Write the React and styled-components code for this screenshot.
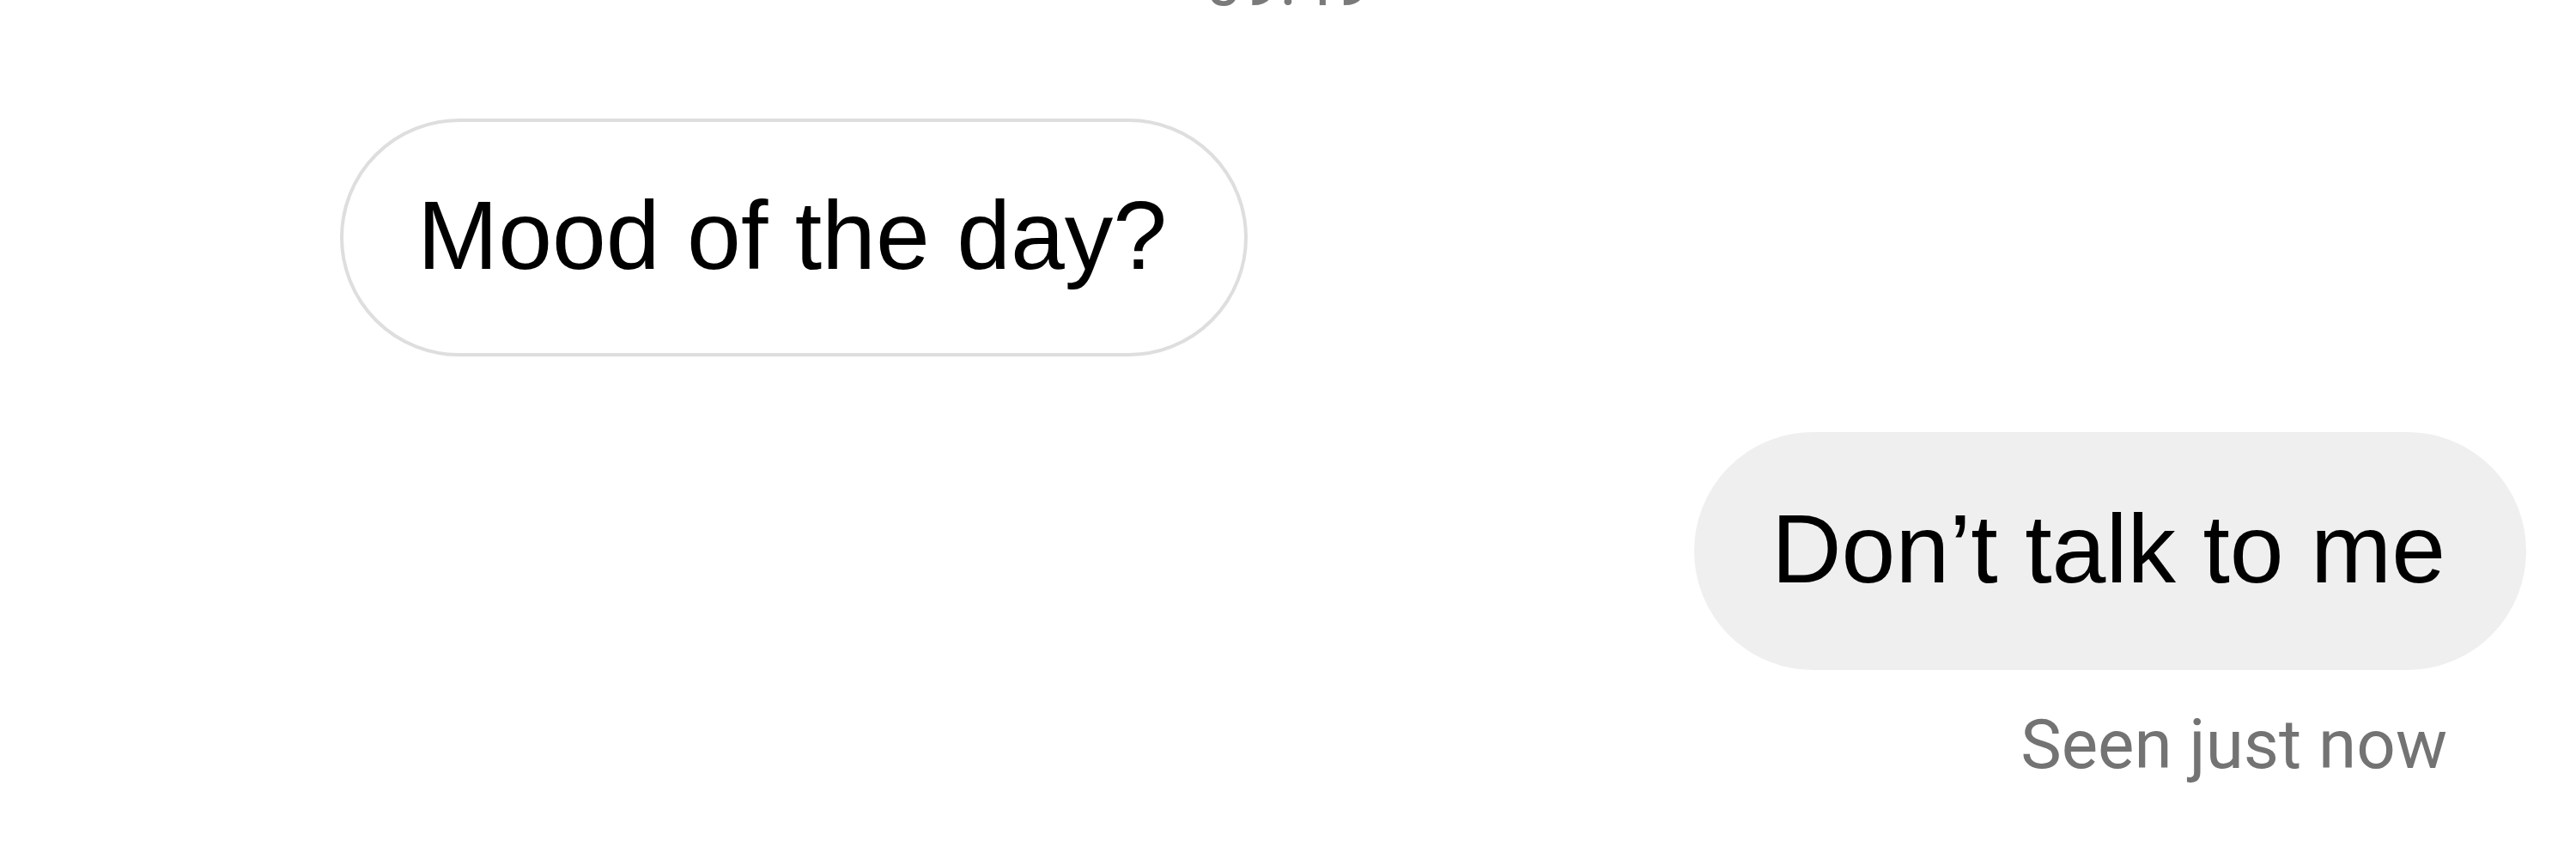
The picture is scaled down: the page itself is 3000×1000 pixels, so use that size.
import React from 'react';
import styled, { createGlobalStyle } from 'styled-components';

const GlobalStyle = createGlobalStyle`
  html, body {
    margin: 0;
    padding: 0;
    background: #ffffff;
  }
  body {
    font-family: 'Liberation Sans', Arial, sans-serif;
  }
`;

const Screen = styled.div`
  width: 3000px;
  height: 1000px;
  overflow: hidden;
  background: #ffffff;
  display: flex;
  flex-direction: column;
`;

// only the bottom of the time shows: the rest scrolled off the top
const Timestamp = styled.div`
  margin-top: -66px;
  text-align: center;
  font-family: Roboto, 'Liberation Sans', sans-serif;
  font-size: 78px;
  color: #7a7a7a;
  line-height: normal;
`;

const Thread = styled.div`
  display: flex;
  flex-direction: column;
  padding: 113px 58px 0 396px;
`;

const Row = styled.div`
  display: flex;
  justify-content: ${(props) => (props.mine ? 'flex-end' : 'flex-start')};
  margin-top: ${(props) => props.gap || 0}px;
`;

const Bubble = styled.div`
  box-sizing: border-box;
  height: 277px;
  display: flex;
  align-items: center;
  padding: 0 90px 4px 86px;
  border-radius: 140px;
  font-size: 113px;
  line-height: 1;
  color: #000000;
  white-space: nowrap;
  background: ${(props) => (props.mine ? '#efefef' : '#ffffff')};
  border: 4px solid ${(props) => (props.mine ? '#efefef' : '#dedede')};
`;

const Status = styled.div`
  margin-top: 40px;
  padding-right: 92px;
  text-align: right;
  font-family: Roboto, 'Liberation Sans', sans-serif;
  font-size: 80px;
  line-height: normal;
  color: #737373;
`;

const App = () => {
  return (
    <Screen>
      <GlobalStyle />
      <Timestamp>09:49</Timestamp>
      <Thread>
        <Row>
          <Bubble>Mood of the day?</Bubble>
        </Row>
        <Row mine gap={88}>
          <Bubble mine>Don’t talk to me</Bubble>
        </Row>
        <Status>Seen just now</Status>
      </Thread>
    </Screen>
  );
};

export default App;
